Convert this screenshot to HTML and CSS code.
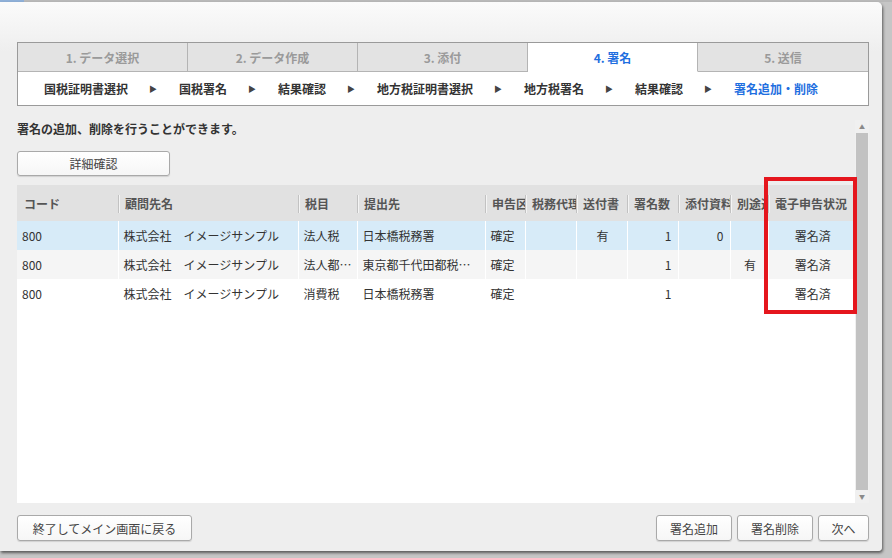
FILE: index.html
```html
<!DOCTYPE html>
<html lang="ja">
<head>
    <meta charset="UTF-8">
    <title>署名</title>
    <link rel="stylesheet" href="styles.css">
</head>
<body>
    <div class="desk-top"></div>
    <div class="dialog">
        <!-- ウィザード -->
        <div class="wizard">
            <div class="tabs">
                <div class="tab">1. データ選択</div>
                <div class="tab">2. データ作成</div>
                <div class="tab">3. 添付</div>
                <div class="tab active">4. 署名</div>
                <div class="tab">5. 送信</div>
            </div>
            <div class="steps">
                <span>国税証明書選択</span><span class="arrow">&#9654;</span>
                <span>国税署名</span><span class="arrow">&#9654;</span>
                <span>結果確認</span><span class="arrow">&#9654;</span>
                <span>地方税証明書選択</span><span class="arrow">&#9654;</span>
                <span>地方税署名</span><span class="arrow">&#9654;</span>
                <span>結果確認</span><span class="arrow">&#9654;</span>
                <span class="current">署名追加・削除</span>
            </div>
        </div>

        <div class="scroll-area">
            <div class="content">
                <p class="guide">署名の追加、削除を行うことができます。</p>
                <button class="btn detail-btn">詳細確認</button>
                <div class="grid">
                    <table>
                        <colgroup>
                            <col style="width:101px"><col style="width:180px"><col style="width:59px">
                            <col style="width:128px"><col style="width:40px"><col style="width:51px">
                            <col style="width:51px"><col style="width:51px"><col style="width:52px">
                            <col style="width:38px"><col style="width:87px">
                        </colgroup>
                        <thead>
                            <tr>
                                <th>コード</th>
                                <th>顧問先名</th>
                                <th>税目</th>
                                <th>提出先</th>
                                <th>申告区分</th>
                                <th>税務代理</th>
                                <th>送付書</th>
                                <th>署名数</th>
                                <th>添付資料</th>
                                <th>別途送付</th>
                                <th>電子申告状況</th>
                            </tr>
                        </thead>
                        <tbody>
                            <tr class="selected">
                                <td>800</td>
                                <td>株式会社　イメージサンプル</td>
                                <td>法人税</td>
                                <td>日本橋税務署</td>
                                <td>確定</td>
                                <td></td>
                                <td class="center">有</td>
                                <td class="num">1</td>
                                <td class="num">0</td>
                                <td></td>
                                <td class="center">署名済</td>
                            </tr>
                            <tr class="alt">
                                <td>800</td>
                                <td>株式会社　イメージサンプル</td>
                                <td>法人都民税</td>
                                <td>東京都千代田都税事務所</td>
                                <td>確定</td>
                                <td></td>
                                <td></td>
                                <td class="num">1</td>
                                <td></td>
                                <td class="center">有</td>
                                <td class="center">署名済</td>
                            </tr>
                            <tr>
                                <td>800</td>
                                <td>株式会社　イメージサンプル</td>
                                <td>消費税</td>
                                <td>日本橋税務署</td>
                                <td>確定</td>
                                <td></td>
                                <td></td>
                                <td class="num">1</td>
                                <td></td>
                                <td></td>
                                <td class="center">署名済</td>
                            </tr>
                        </tbody>
                    </table>
                </div>
            </div>
            <div class="scrollbar">
                <div class="sb-btn">&#9650;</div>
                <div class="sb-thumb"></div>
                <div class="sb-btn">&#9660;</div>
            </div>
        </div>

        <div class="footer">
            <button class="btn back-btn">終了してメイン画面に戻る</button>
            <div class="footer-right">
                <button class="btn">署名追加</button>
                <button class="btn">署名削除</button>
                <button class="btn next-btn">次へ</button>
            </div>
        </div>

        <!-- 強調枠 -->
        <div class="highlight"></div>
    </div>
</body>
</html>
```

FILE: styles.css
```css
body {
    margin: 0;
    background: #c6c6c6;
    font-family: "Noto Sans CJK JP", "Noto Sans", sans-serif;
    font-size: 12px;
    color: #333;
    overflow: hidden;
    height: 558px;
}

.desk-top {
    height: 2px;
    background: linear-gradient(90deg, #8fb0d8 0, #8fb0d8 24px, #b9b9b9 24px);
}

.dialog {
    position: relative;
    width: 882px;
    height: 549px;
    box-sizing: border-box;
    padding: 40px 13px 0 17px;
    background: linear-gradient(#fbfbfb, #eeeeee 50px);
    border-radius: 0 5px 4px 0;
    box-shadow: 1px 2px 3px rgba(0, 0, 0, 0.55);
    display: flex;
    flex-direction: column;
}

/* ウィザード */
.wizard {
    border: 1px solid #9a9a9a;
    background: #ffffff;
}

.tabs {
    display: grid;
    grid-template-columns: repeat(5, 1fr);
    height: 29px;
}

.tab {
    display: flex;
    align-items: center;
    justify-content: center;
    background: #e3e3e3;
    color: #9a9a9a;
    font-weight: bold;
    font-size: 12px;
    border-right: 1px solid #b4b4b4;
    border-bottom: 1px solid #b4b4b4;
}

.tab:last-child {
    border-right: none;
}

.tab.active {
    background: #ffffff;
    color: #1f6fe0;
    border-bottom-color: #ffffff;
}

.steps {
    height: 33px;
    display: flex;
    align-items: center;
    padding-left: 26px;
    font-weight: bold;
    color: #333;
    white-space: nowrap;
}

.steps .arrow {
    font-size: 8px;
    color: #444;
    margin: 0 22px 0 21px;
}

.steps .current {
    color: #1f6fe0;
}

/* スクロール領域 */
.scroll-area {
    margin-top: 14px;
    height: 383px;
    display: flex;
}

.content {
    flex: 1;
    display: flex;
    flex-direction: column;
}

.guide {
    margin: 0;
    height: 18px;
    line-height: 18px;
    font-weight: bold;
    color: #333;
}

.btn {
    font-family: inherit;
    font-size: 12px;
    color: #444;
    background: linear-gradient(#ffffff, #f6f6f6);
    border: 1px solid #a9a9a9;
    border-radius: 3px;
    height: 26px;
    padding: 0 10px;
    box-shadow: 0 1px 1px rgba(0, 0, 0, 0.12);
    cursor: pointer;
}

.detail-btn {
    margin-top: 13px;
    width: 153px;
    height: 25px;
}

.grid {
    margin-top: 9px;
    flex: 1;
    background: #ffffff;
    overflow: hidden;
}

table {
    width: 838px;
    table-layout: fixed;
    border-collapse: collapse;
}

th {
    position: relative;
    height: 36px;
    padding: 0 0 0 7px;
    background: #e1e1e1;
    color: #555;
    font-weight: bold;
    text-align: left;
    white-space: nowrap;
    overflow: hidden;
}

th + th::before {
    content: "";
    position: absolute;
    left: 0;
    top: 10px;
    height: 18px;
    border-left: 1px solid #c2c2c2;
    border-right: 1px solid #f4f4f4;
}

td {
    height: 29px;
    padding: 0 3px 0 5px;
    border-left: 1px solid #ffffff;
    white-space: nowrap;
    overflow: hidden;
    text-overflow: ellipsis;
    color: #333;
}

td:first-child {
    border-left: none;
}

td.center {
    text-align: center;
}

td.num {
    text-align: right;
    padding-right: 6px;
}

tr.selected td {
    background: #d7ebf8;
}

tr.alt td {
    background: #f5f5f5;
}

.scrollbar {
    width: 14px;
    display: flex;
    flex-direction: column;
    background: #f0f0f0;
}

.sb-btn {
    height: 13px;
    font-size: 6px;
    line-height: 13px;
    text-align: center;
    color: #8a8a8a;
}

.sb-thumb {
    flex: 1;
    margin: 0 1px;
    background: #c2c2c2;
}

/* フッター */
.footer {
    margin-top: 12px;
    display: flex;
    justify-content: space-between;
}

.back-btn {
    width: 175px;
}

.footer-right {
    display: flex;
    gap: 5px;
}

.footer-right .btn {
    width: 76px;
}

.footer-right .next-btn {
    width: 51px;
}

.highlight {
    position: absolute;
    left: 764px;
    top: 175px;
    width: 85px;
    height: 129px;
    border: 4px solid #e5161d;
}
```
